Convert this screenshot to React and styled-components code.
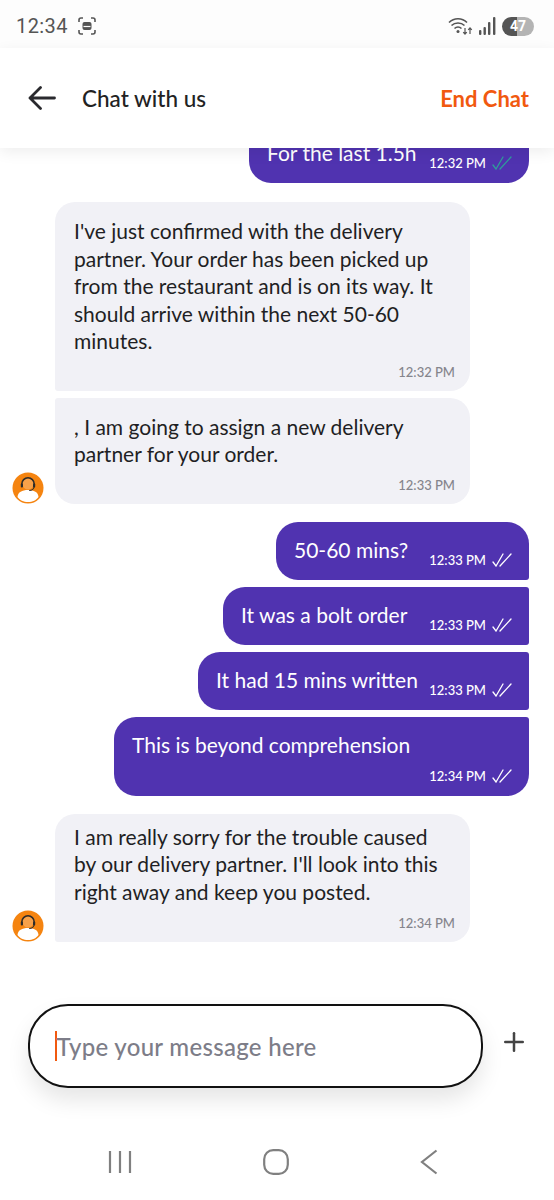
import styled, { createGlobalStyle } from "styled-components";
import { Plus } from "lucide-react";

const GlobalStyle = createGlobalStyle`
  html, body {
    margin: 0;
    padding: 0;
    background: #fff;
  }
  body {
    font-family: "Lato", "Liberation Sans", sans-serif;
  }
`;

const Page = styled.div`
  width: 554px;
  height: 1200px;
  display: flex;
  flex-direction: column;
  background: #fff;
  overflow: hidden;
`;

const StatusBar = styled.div`
  height: 48px;
  flex-shrink: 0;
  box-sizing: border-box;
  padding: 16px 20px 0 16px;
  display: flex;
  justify-content: space-between;
  align-items: flex-start;
  background: #fdfdfd;
  color: #555;
`;

const StatusGroup = styled.div`
  display: flex;
  align-items: center;
  gap: ${props => props.$gap}px;
  height: 20px;
`;

const StatusTime = styled.span`
  font-family: "Roboto", sans-serif;
  font-size: 20px;
  letter-spacing: 0.4px;
`;

const Battery = styled.div`
  width: 32px;
  height: 19px;
  border-radius: 10px;
  background: linear-gradient(to right, #555 0 47%, #b4b4b4 47% 100%);
  color: #fff;
  font-family: "Roboto", sans-serif;
  font-size: 14px;
  font-weight: 700;
  display: flex;
  align-items: center;
  justify-content: center;
`;

const Header = styled.header`
  height: 100px;
  flex-shrink: 0;
  box-sizing: border-box;
  padding: 0 25px 0 28px;
  display: flex;
  align-items: center;
  background: #fff;
  box-shadow: 0 4px 14px rgba(0, 0, 0, 0.07);
  position: relative;
  z-index: 2;
`;

const Title = styled.h1`
  margin: 0 0 0 26px;
  font-size: 22.5px;
  font-weight: 500;
  color: #222;
  flex: 1;
`;

const EndChat = styled.button`
  border: 0;
  padding: 0;
  background: none;
  font-family: inherit;
  font-size: 22px;
  font-weight: 700;
  color: #f1590f;
`;

const Messages = styled.main`
  flex: 1;
  min-height: 0;
  overflow: hidden;
  display: flex;
  flex-direction: column;
  justify-content: flex-end;
  padding-bottom: 48px;
`;

const SentRow = styled.div`
  display: flex;
  justify-content: flex-end;
  padding-right: 25px;
  margin-top: ${props => props.$top}px;
  flex-shrink: 0;
`;

const SentBubble = styled.div`
  box-sizing: border-box;
  background: #5033b0;
  color: #fff;
  min-height: 58px;
  padding: 15px 17px 11px 18px;
  border-radius: ${props => props.$radius};
  display: flex;
  flex-direction: ${props => (props.$stacked ? "column" : "row")};
  align-items: flex-end;
  gap: ${props => (props.$stacked ? "9px" : "19px")};
  width: ${props => props.$width}px;
`;

const SentText = styled.div`
  font-size: 21px;
  line-height: 26px;
  align-self: flex-start;
  white-space: nowrap;
  flex: ${props => (props.$stacked ? "none" : "1 1 0")};
  min-width: 0;
`;

const SentMeta = styled.div`
  display: flex;
  align-items: center;
  gap: 6px;
  font-size: 13px;
  font-weight: 500;
  line-height: 18px;
  white-space: nowrap;
`;

const ReceivedRow = styled.div`
  display: flex;
  align-items: flex-end;
  gap: 11px;
  padding-left: 12px;
  margin-top: ${props => props.$top}px;
  flex-shrink: 0;
`;

const AvatarSlot = styled.div`
  width: 32px;
  height: 32px;
  flex-shrink: 0;
`;

const ReceivedBubble = styled.div`
  box-sizing: border-box;
  width: 415px;
  background: #f1f1f6;
  color: #1f1f24;
  padding: ${props => props.$pad}px 15px 10px 19px;
  border-radius: ${props => props.$radius};
`;

const ReceivedText = styled.div`
  font-size: 21px;
  line-height: 27.5px;
  white-space: pre-line;
`;

const ReceivedTime = styled.div`
  margin-top: ${props => props.$gap}px;
  text-align: right;
  font-size: 13px;
  font-weight: 500;
  line-height: 18px;
  color: #85858c;
`;

const Composer = styled.div`
  flex-shrink: 0;
  display: flex;
  align-items: center;
  padding: 14px 0 0 28px;
`;

const InputBox = styled.div`
  width: 455px;
  box-sizing: border-box;
  height: 84px;
  border: 2px solid #111;
  border-radius: 40px;
  padding: 0 0 0 25px;
  display: flex;
  align-items: center;
  background: #fff;
  box-shadow: 0 12px 22px rgba(0, 0, 0, 0.1);
`;

const Caret = styled.span`
  width: 1.5px;
  height: 30px;
  background: #f1590f;
`;

const Placeholder = styled.span`
  font-size: 24px;
  font-weight: 500;
  letter-spacing: 0.3px;
  color: #7d7d88;
`;

const AddButton = styled.div`
  margin-left: 16px;
  margin-top: -8px;
  display: flex;
  color: #444;
`;

const NavBar = styled.nav`
  height: 70px;
  flex-shrink: 0;
  box-sizing: border-box;
  padding: 0 116px 6px 108px;
  margin-top: 42px;
  display: flex;
  justify-content: space-between;
  align-items: center;
  color: #808080;
`;

function ScreenshotIcon() {
  return (
    <svg width="18" height="18" viewBox="0 0 18 18" fill="none" stroke="#555" strokeWidth="1.6">
      <path d="M1 5V3a2 2 0 0 1 2-2h2M13 1h2a2 2 0 0 1 2 2v2M17 13v2a2 2 0 0 1-2 2h-2M5 17H3a2 2 0 0 1-2-2v-2" />
      <rect x="4.5" y="5" width="9" height="8" rx="2" fill="#555" stroke="none" />
      <path d="M5.5 9.5h7" stroke="#fdfdfd" strokeWidth="1.2" />
    </svg>
  );
}

function WifiIcon() {
  return (
    <svg width="25" height="20" viewBox="0 0 25 20" fill="none" stroke="#555" strokeWidth="1.6">
      <path d="M1 6.500C6 1.500 14 1.500 19 6.500M3.500 9.500c3.500-3.400 9.500-3.400 13 0M6.500 12.500c2-1.800 5-1.800 7 0" />
      <circle cx="10" cy="15.500" r="1.500" fill="#555" stroke="none" />
      <path d="M17 12v6M15.200 16.200l1.800 2 1.800-2M22 18v-6M20.200 13.800l1.800-2 1.800 2" strokeWidth="1.200" />
    </svg>
  );
}

function SignalIcon() {
  return (
    <svg width="17" height="18" viewBox="0 0 17 18" fill="#555">
      <rect x="0" y="13" width="2.400" height="5" rx="1" />
      <rect x="4.500" y="10" width="2.400" height="8" rx="1" />
      <rect x="9" y="5" width="2.400" height="13" rx="1" />
      <rect x="14" y="0" width="2.400" height="18" rx="1" />
    </svg>
  );
}

function BackArrow() {
  return (
    <svg width="28" height="24" viewBox="0 0 28 24" fill="none" stroke="#2a2a2e" strokeWidth="2.800" strokeLinecap="round" strokeLinejoin="round">
      <path d="M26.500 12H2M12.500 1.500L2 12l10.500 10.500" />
    </svg>
  );
}

function Ticks({ color }) {
  return (
    <svg width="20" height="14" viewBox="0 0 20 14" fill="none" stroke={color} strokeWidth="1.300" strokeLinecap="round">
      <path d="M1 9l3 4L11 1M8 13L19 1" />
    </svg>
  );
}

function Avatar() {
  return (
    <svg width="32" height="32" viewBox="0 0 32 32">
      <circle cx="16" cy="16" r="15.500" fill="#f58410" />
      <path d="M5.500 25c.5-5 4.500-7 10.500-7s10 2 10.500 7c-2 3-6 5-10.500 5s-8.500-2-10.500-5z" fill="#fff" />
      <circle cx="16" cy="12" r="5.500" fill="#f7a14a" />
      <path d="M9.800 13.500V12a6.200 6.200 0 0 1 12.400 0v1.500" fill="none" stroke="#2b2b2b" strokeWidth="1.500" />
      <path d="M22.200 14c0 3-2.500 4.500-5 4.500" fill="none" stroke="#2b2b2b" strokeWidth="1.100" />
      <rect x="8.800" y="11.500" width="2.200" height="4" rx="1" fill="#2b2b2b" />
      <rect x="21" y="11.500" width="2.200" height="4" rx="1" fill="#2b2b2b" />
    </svg>
  );
}

function NavRecent() {
  return (
    <svg width="24" height="24" viewBox="0 0 24 24" stroke="currentColor" strokeWidth="2.200">
      <path d="M2 1v22M12 1v22M22 1v22" />
    </svg>
  );
}

function NavHome() {
  return (
    <svg width="26" height="26" viewBox="0 0 26 26" fill="none" stroke="currentColor" strokeWidth="2.200">
      <rect x="1.200" y="1.200" width="23.600" height="23.600" rx="9" />
    </svg>
  );
}

function NavBack() {
  return (
    <svg width="18" height="26" viewBox="0 0 18 26" fill="none" stroke="currentColor" strokeWidth="2.200">
      <path d="M16.500 1.500L2 13l14.500 11.500" />
    </svg>
  );
}

function Sent({ text, time, top, width, radius, stacked, tick = "#fff" }) {
  return (
    <SentRow $top={top}>
      <SentBubble $width={width} $radius={radius} $stacked={stacked}>
        <SentText $stacked={stacked}>{text}</SentText>
        <SentMeta>
          {time}
          <Ticks color={tick} />
        </SentMeta>
      </SentBubble>
    </SentRow>
  );
}

function Received({ text, time, top, pad, gap = 8, radius, avatar }) {
  return (
    <ReceivedRow $top={top}>
      <AvatarSlot>{avatar && <Avatar />}</AvatarSlot>
      <ReceivedBubble $pad={pad} $radius={radius}>
        <ReceivedText>{text}</ReceivedText>
        <ReceivedTime $gap={gap}>{time}</ReceivedTime>
      </ReceivedBubble>
    </ReceivedRow>
  );
}

export default function App() {
  return (
    <Page>
      <GlobalStyle />
      <StatusBar>
        <StatusGroup $gap={10}>
          <StatusTime>12:34</StatusTime>
          <ScreenshotIcon />
        </StatusGroup>
        <StatusGroup $gap={6}>
          <WifiIcon />
          <SignalIcon />
          <Battery>47</Battery>
        </StatusGroup>
      </StatusBar>

      <Header>
        <BackArrow />
        <Title>Chat with us</Title>
        <EndChat>End Chat</EndChat>
      </Header>

      <Messages>
        <Sent
          text="For the last 1.5h"
          time="12:32 PM"
          width={280}
          radius="22px 3px 22px 22px"
          tick="#2f9c9a"
        />
        <Received
          top={19}
          pad={15}
          radius="20px 20px 20px 3px"
          time="12:32 PM"
          text={"I've just confirmed with the delivery\npartner. Your order has been picked up\nfrom the restaurant and is on its way. It\nshould arrive within the next 50-60\nminutes."}
        />
        <Received
          top={7}
          pad={15}
          radius="3px 20px 20px 20px"
          time="12:33 PM"
          avatar
          text={", I am going to assign a new delivery\npartner for your order."}
        />
        <Sent top={18} text="50-60 mins?" time="12:33 PM" width={253} radius="22px 22px 3px 22px" />
        <Sent top={7} text="It was a bolt order" time="12:33 PM" width={306} radius="22px 3px 3px 22px" />
        <Sent top={7} text="It had 15 mins written" time="12:33 PM" width={331} radius="22px 3px 3px 22px" />
        <Sent
          top={7}
          text="This is beyond comprehension"
          time="12:34 PM"
          width={415}
          radius="22px 3px 22px 22px"
          stacked
        />
        <Received
          top={18}
          pad={9}
          gap={9}
          radius="20px 20px 20px 3px"
          time="12:34 PM"
          avatar
          text={"I am really sorry for the trouble caused\nby our delivery partner. I'll look into this\nright away and keep you posted."}
        />
      </Messages>

      <Composer>
        <InputBox>
          <Caret />
          <Placeholder>Type your message here</Placeholder>
        </InputBox>
        <AddButton>
          <Plus size={30} strokeWidth={2} />
        </AddButton>
      </Composer>

      <NavBar>
        <NavRecent />
        <NavHome />
        <NavBack />
      </NavBar>
    </Page>
  );
}
